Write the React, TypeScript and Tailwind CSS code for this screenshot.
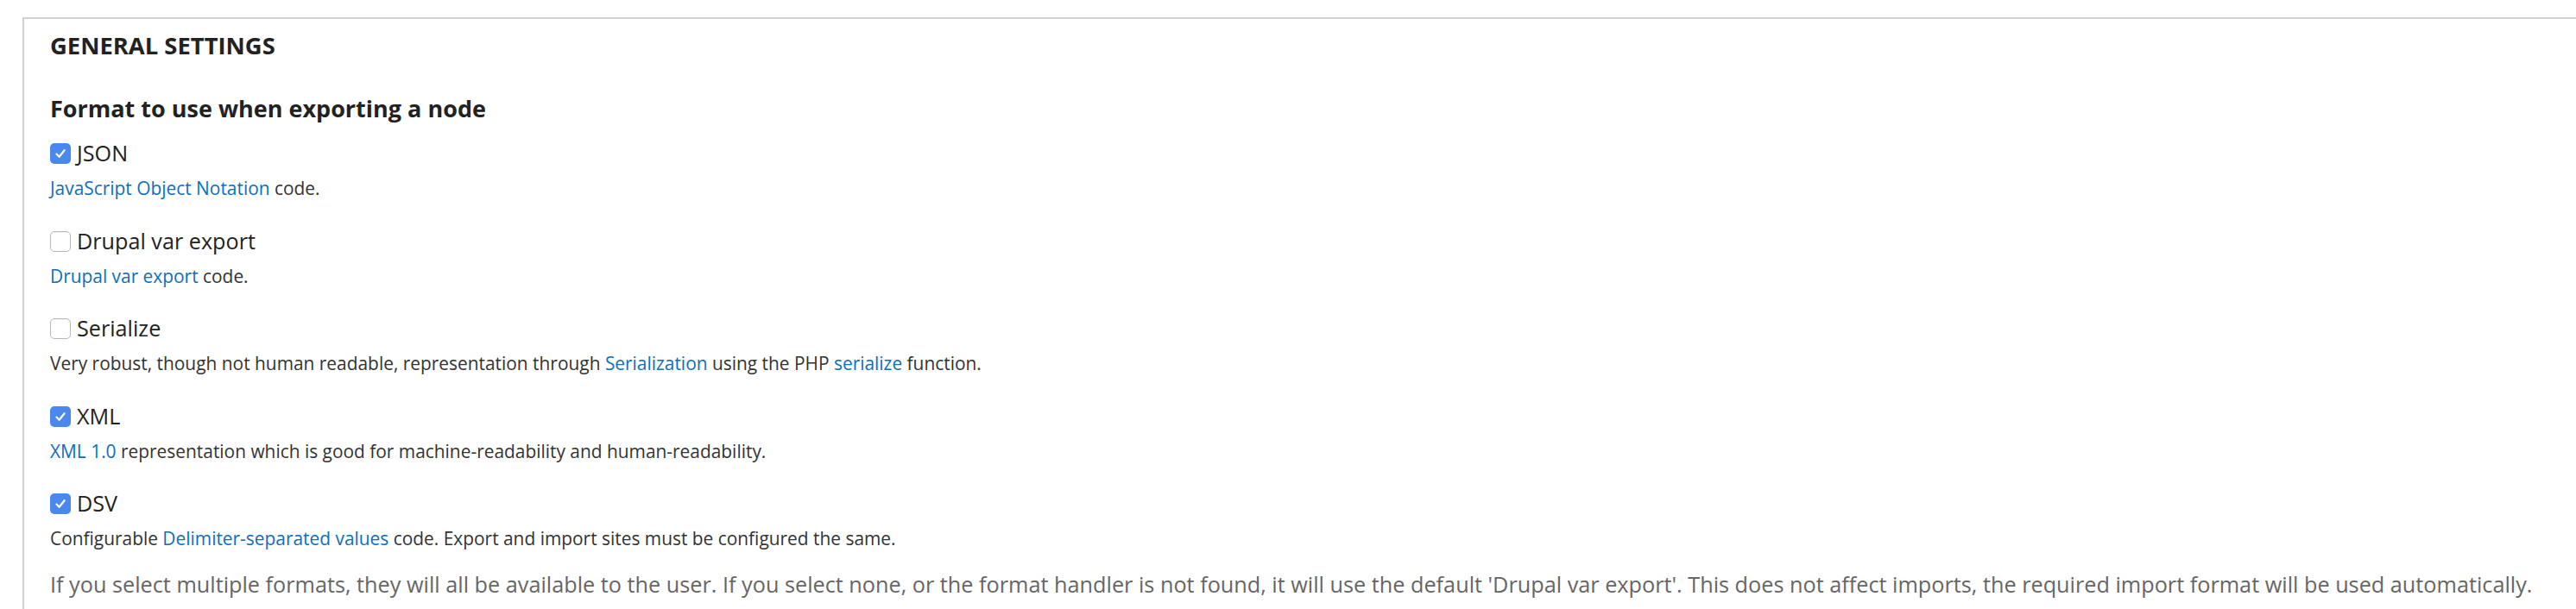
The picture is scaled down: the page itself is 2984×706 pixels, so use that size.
import React from "react";

type Part = { text: string; href?: boolean };

const formats: { label: string; checked: boolean; desc: Part[] }[] = [
  {
    label: "JSON",
    checked: true,
    desc: [{ text: "JavaScript Object Notation", href: true }, { text: " code." }],
  },
  {
    label: "Drupal var export",
    checked: false,
    desc: [{ text: "Drupal var export", href: true }, { text: " code." }],
  },
  {
    label: "Serialize",
    checked: false,
    desc: [
      { text: "Very robust, though not human readable, representation through " },
      { text: "Serialization", href: true },
      { text: " using the PHP " },
      { text: "serialize", href: true },
      { text: " function." },
    ],
  },
  {
    label: "XML",
    checked: true,
    desc: [
      { text: "XML 1.0", href: true },
      { text: " representation which is good for machine-readability and human-readability." },
    ],
  },
  {
    label: "DSV",
    checked: true,
    desc: [
      { text: "Configurable " },
      { text: "Delimiter-separated values", href: true },
      { text: " code. Export and import sites must be configured the same." },
    ],
  },
];

function Checkbox({ checked }: { checked: boolean }) {
  if (checked) {
    return (
      <span className="w-[24px] h-[24px] rounded-[5px] bg-[#4a88f0] flex items-center justify-center shrink-0">
        <svg width="16" height="16" viewBox="0 0 16 16" fill="none">
          <path d="M3.5 8.6 L6.6 11.8 L12.6 4.2" stroke="#fff" strokeWidth="2.2" strokeLinecap="round" strokeLinejoin="round" />
        </svg>
      </span>
    );
  }
  return (
    <span className="w-[24px] h-[24px] rounded-[5px] bg-white border border-[#b8b8b8] shadow-[inset_0_1px_1px_rgba(0,0,0,0.06)] shrink-0" />
  );
}

export default function App() {
  return (
    <div className="w-[2984px] h-[706px] bg-white overflow-hidden pt-[20px] pl-[26px] font-['Open_Sans',sans-serif] text-[#333]">
      <fieldset className="w-[3000px] h-[720px] border-t-2 border-l-2 border-[#d0d0d0] pl-[30px]">
        <div className="h-[50px] pt-[13px] text-[27.4px] leading-[36px] font-bold uppercase text-[#222]">
          General Settings
        </div>
        <div className="mt-[34px] text-[27px] leading-[40px] font-bold text-[#222]">
          Format to use when exporting a node
        </div>

        <div className="mt-[14px]">
          {formats.map((f) => (
            <div key={f.label} className="h-[101.5px]">
              <label className="flex items-center gap-[7px] h-[36px] text-[25.2px] leading-[36px] text-[#222]">
                <Checkbox checked={f.checked} />
                <span className="-mt-[2px]">{f.label}</span>
              </label>
              <div className="mt-[7px] text-[20.9px] leading-[30px]">
                {f.desc.map((p, i) =>
                  p.href ? (
                    <a key={i} className="text-[#0d6fbd]">
                      {p.text}
                    </a>
                  ) : (
                    <span key={i}>{p.text}</span>
                  )
                )}
              </div>
            </div>
          ))}
        </div>

        <div className="-mt-[8px] text-[25.25px] leading-[34px] text-[#666] whitespace-nowrap">
          If you select multiple formats, they will all be available to the user. If you select none, or the format
          handler is not found, it will use the default 'Drupal var export'. This does not affect imports, the
          required import format will be used automatically.
        </div>
      </fieldset>
    </div>
  );
}
